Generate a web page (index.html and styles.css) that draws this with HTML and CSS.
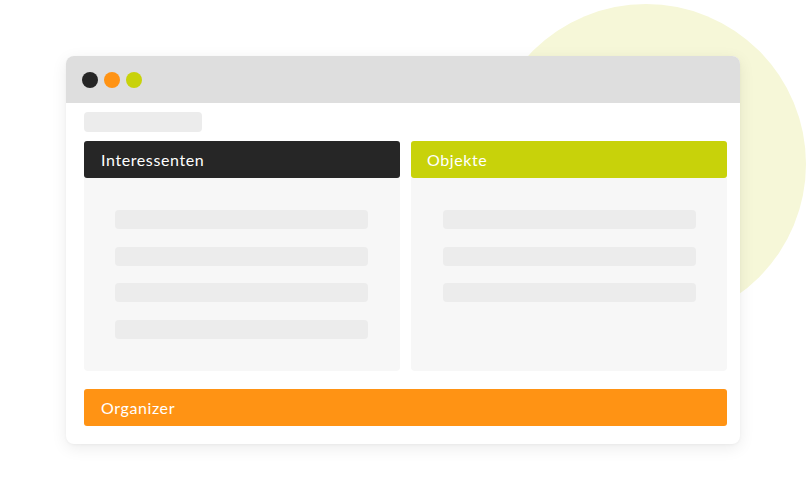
FILE: index.html
```html
<!DOCTYPE html>
<html lang="de">
<head>
<meta charset="utf-8">
<title>Organizer</title>
<link rel="stylesheet" href="styles.css">
</head>
<body>
<div class="stage">
  <div class="blob"></div>
  <div class="window">
    <div class="titlebar">
      <span class="dot dot-dark"></span>
      <span class="dot dot-orange"></span>
      <span class="dot dot-lime"></span>
    </div>
    <div class="content">
      <div class="crumb"></div>
      <div class="columns">
        <div class="col">
          <div class="col-head head-dark">Interessenten</div>
          <div class="col-body">
            <div class="line"></div>
            <div class="line"></div>
            <div class="line"></div>
            <div class="line"></div>
          </div>
        </div>
        <div class="col">
          <div class="col-head head-lime">Objekte</div>
          <div class="col-body">
            <div class="line"></div>
            <div class="line"></div>
            <div class="line"></div>
          </div>
        </div>
      </div>
      <div class="bar-orange">Organizer</div>
    </div>
  </div>
</div>
</body>
</html>
```
FILE: styles.css
```css
html, body {
  margin: 0;
  padding: 0;
  background: #ffffff;
}
body {
  width: 812px;
  height: 500px;
  overflow: hidden;
  font-family: "Lato", "Open Sans", "Liberation Sans", sans-serif;
}
.stage {
  position: relative;
  width: 812px;
  height: 500px;
  padding: 56px 0 0 66px;
  box-sizing: border-box;
}
.blob {
  position: absolute;
  left: 486px;
  top: 4px;
  width: 320px;
  height: 320px;
  border-radius: 50%;
  background: #f6f7d8;
}
.window {
  position: relative;
  width: 674px;
  height: 388px;
  background: #ffffff;
  border-radius: 8px;
  box-shadow: 0 4px 16px rgba(0, 0, 0, 0.08), 0 1px 3px rgba(0, 0, 0, 0.04);
  overflow: hidden;
  display: flex;
  flex-direction: column;
}
.titlebar {
  height: 47px;
  background: #dedede;
  display: flex;
  align-items: center;
  gap: 6px;
  padding-left: 16px;
  box-sizing: border-box;
}
.dot {
  width: 16px;
  height: 16px;
  border-radius: 50%;
}
.dot-dark { background: #262626; }
.dot-orange { background: #ff9314; }
.dot-lime { background: #c8d20a; }
.content {
  padding: 9px 13px 0 18px;
  display: flex;
  flex-direction: column;
}
.crumb {
  width: 118px;
  height: 20px;
  border-radius: 4px;
  background: #ececec;
}
.columns {
  margin-top: 9px;
  display: flex;
  gap: 11px;
}
.col {
  width: 316px;
  display: flex;
  flex-direction: column;
}
.col-head,
.bar-orange {
  height: 36.5px;
  border-radius: 3px;
  color: #ffffff;
  font-size: 16px;
  font-weight: 400;
  letter-spacing: 0.6px;
  display: flex;
  align-items: center;
  padding-left: 17px;
  padding-top: 1px;
  box-sizing: border-box;
}
.head-dark { background: #262626; }
.head-lime { background: #c8d20a; padding-left: 16px; }
.col-body {
  height: 193.5px;
  box-sizing: border-box;
  background: #f7f7f7;
  border-radius: 0 0 4px 4px;
  padding: 32.5px 32px 0 31px;
  display: flex;
  flex-direction: column;
  gap: 17.5px;
}
.col:last-child .col-body {
  padding-left: 32px;
  padding-right: 31px;
}
.line {
  height: 19px;
  border-radius: 4px;
  background: #ececec;
}
.bar-orange {
  margin-top: 18px;
  background: #ff9314;
}
```
